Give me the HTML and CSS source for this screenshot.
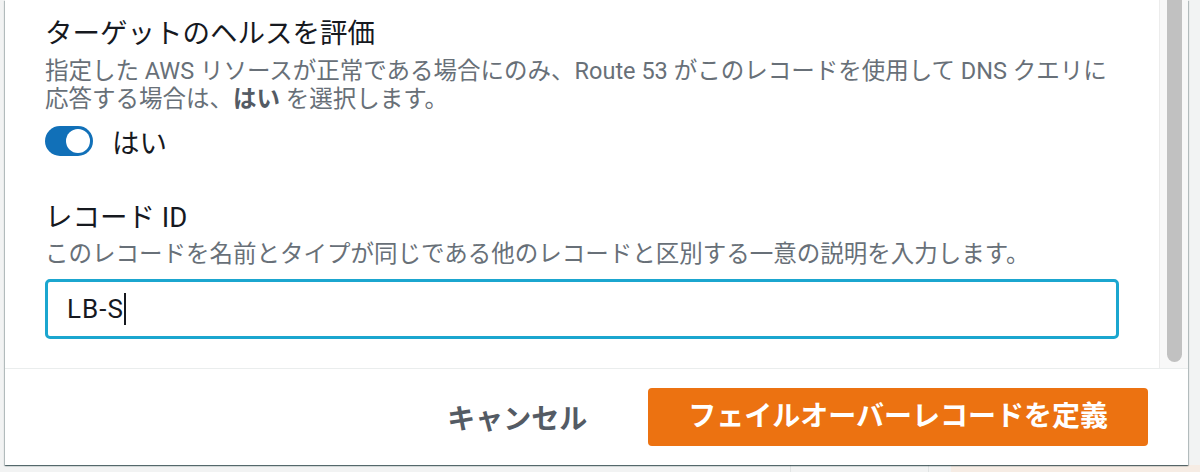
FILE: index.html
```html
<!DOCTYPE html>
<html lang="ja">
<head>
<meta charset="utf-8">
<link rel="stylesheet" href="styles.css">
</head>
<body>
<div class="modal">
  <div class="scroll">
    <div class="content">
      <div class="field first">
        <div class="label">ターゲットのヘルスを評価</div>
        <div class="desc">指定した AWS リソースが正常である場合にのみ、Route 53 がこのレコードを使用して DNS クエリに<br>応答する場合は、<b>はい</b> を選択します。</div>
        <div class="toggle-row">
          <span class="toggle"><span class="knob"></span></span>
          <span class="toggle-text">はい</span>
        </div>
      </div>
      <div class="field second">
        <div class="label">レコード ID</div>
        <div class="desc">このレコードを名前とタイプが同じである他のレコードと区別する一意の説明を入力します。</div>
        <div class="input"><span class="value">LB-S</span><span class="caret"></span></div>
      </div>
    </div>
    <div class="scrollbar"><div class="thumb"></div></div>
  </div>
  <div class="footer">
    <span class="cancel">キャンセル</span>
    <span class="primary">フェイルオーバーレコードを定義</span>
  </div>
</div>
<div class="under">
  <div class="seg seg-a"></div>
  <div class="seg seg-b"></div>
  <div class="seg seg-c"></div>
  <div class="seg seg-d"></div>
</div>
</body>
</html>
```

FILE: styles.css
```css
html, body {
  margin: 0;
  padding: 0;
}
body {
  width: 1200px;
  height: 472px;
  overflow: hidden;
  background: #f2f3f3;
  font-family: Roboto, "Noto Sans CJK JP", sans-serif;
  color: #16191f;
}
.modal {
  position: relative;
  z-index: 1;
  margin-left: 5px;
  width: 1183px;
  height: 465px;
  background: #fff;
  display: flex;
  flex-direction: column;
  box-shadow: 0 1px 1px 0 rgba(0, 28, 36, 0.45), 1px 1px 1px 0 rgba(0, 28, 36, 0.2), -1px 1px 1px 0 rgba(0, 28, 36, 0.2);
}
.scroll {
  height: 368px;
  display: flex;
  border-bottom: 1px solid #eaeded;
}
.content {
  flex: 1;
  padding: 16px 40px 0 40px;
}
.scrollbar {
  width: 28px;
  border-left: 1px solid #ececec;
  background: #f8f8f8;
  display: flex;
  justify-content: center;
}
.thumb {
  width: 15px;
  height: 362px;
  background: #c1c1c1;
  border-radius: 0 0 8px 8px;
}
.label {
  font-size: 27.5px;
  line-height: 36px;
}
.desc {
  font-size: 23.5px;
  line-height: 28px;
  color: #687078;
  margin-top: 5px;
  white-space: nowrap;
}
.desc b {
  font-weight: 700;
  color: #545b64;
}
.toggle-row {
  margin-top: 10px;
  height: 36px;
  display: flex;
  align-items: center;
}
.toggle {
  width: 48px;
  height: 30px;
  border-radius: 15px;
  background: #1170b8;
  display: flex;
  align-items: center;
  justify-content: flex-end;
  padding-right: 3px;
  box-sizing: border-box;
}
.knob {
  width: 24px;
  height: 24px;
  border-radius: 50%;
  background: #fff;
}
.toggle-text {
  margin-left: 19px;
  font-size: 27.5px;
}
.second {
  margin-top: 41px;
}
.second .desc {
  margin-top: 4px;
}
.input {
  margin-top: 11px;
  height: 60px;
  box-sizing: border-box;
  border: 3px solid #1ba6cf;
  border-radius: 5px;
  display: flex;
  align-items: center;
  padding-left: 19px;
  font-size: 26px;
  letter-spacing: 1px;
}
.caret {
  width: 2px;
  height: 32px;
  background: #16191f;
}
.footer {
  flex: 1;
  display: flex;
  align-items: center;
  justify-content: flex-end;
  padding-right: 40px;
}
.cancel {
  font-size: 28px;
  font-weight: 700;
  color: #545b64;
  margin-right: 61px;
}
.primary {
  background: #ec7211;
  color: #fff;
  font-size: 28px;
  font-weight: 700;
  height: 58px;
  line-height: 58px;
  padding: 0 40px;
  border-radius: 4px;
}
.under {
  display: flex;
  height: 7px;
}
.seg-a {
  width: 790px;
  border-right: 1px solid #e1e4e4;
}
.seg-b {
  width: 137px;
  border-right: 1px solid #e1e4e4;
}
.seg-c {
  width: 22px;
}
.seg-d {
  flex: 1;
  background: #f6ece4;
}
```
